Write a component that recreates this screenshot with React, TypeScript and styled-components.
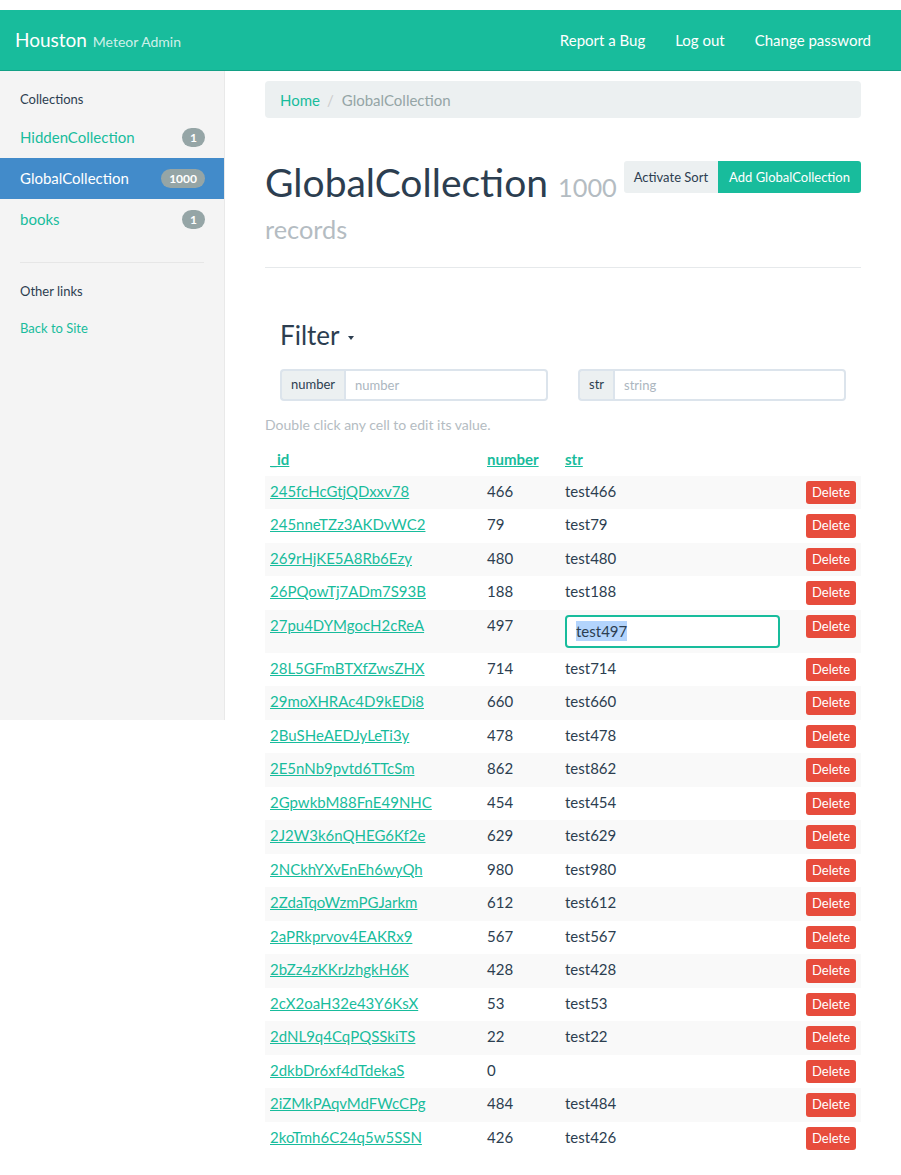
import React from "react";
import styled, { createGlobalStyle } from "styled-components";

const GlobalStyle = createGlobalStyle`
  html, body { margin: 0; padding: 0; background: #fff; }
  body {
    font-family: Lato, "Open Sans", "Liberation Sans", sans-serif;
    font-size: 15px;
    line-height: 1.42857;
    color: #2c3e50;
  }
  * { box-sizing: border-box; }
`;

const Page = styled.div`
  padding-top: 10px;
`;

const Navbar = styled.nav`
  height: 61px;
  background: #18bc9c;
  border-bottom: 1px solid #13a085;
  display: flex;
  align-items: center;
  justify-content: space-between;
  padding: 0 15px;
`;

const Brand = styled.a`
  color: #fff;
  font-size: 19px;
  text-decoration: none;
  white-space: nowrap;
`;

const BrandSub = styled.small`
  font-size: 14px;
  color: rgba(255, 255, 255, 0.8);
  margin-left: 1px;
`;

const NavLinks = styled.ul`
  display: flex;
  list-style: none;
  margin: 0;
  padding: 0;
`;

const NavLink = styled.a`
  display: block;
  color: #fff;
  font-size: 15px;
  padding: 0 15px;
  line-height: 20px;
  text-decoration: none;
`;

const Layout = styled.div`
  display: flex;
  align-items: flex-start;
`;

const Sidebar = styled.aside`
  width: 225px;
  flex: 0 0 225px;
  min-height: 649px;
  background: #f4f4f4;
  border-right: 1px solid #e9e9e9;
  padding-top: 19px;
`;

const SideHeader = styled.div<{ $mt?: number }>`
  font-size: 13px;
  color: #2c3e50;
  padding: 0 20px;
  line-height: 18.6px;
  margin-top: ${(p) => p.$mt ?? 0}px;
`;

const SideNav = styled.ul`
  list-style: none;
  margin: 8.5px 0 0;
  padding: 0;
`;

const SideItem = styled.li<{ $active?: boolean }>`
  height: 40.5px;
  margin-top: 0.5px;
  display: flex;
  align-items: center;
  justify-content: space-between;
  padding: 0 19px 0 20px;
  background: ${(p) => (p.$active ? "#428bca" : "transparent")};
`;

const SideLink = styled.a<{ $active?: boolean }>`
  color: ${(p) => (p.$active ? "#fff" : "#18bc9c")};
  font-size: 15px;
  text-decoration: none;
`;

const Badge = styled.span`
  display: inline-block;
  min-width: 21px;
  padding: 0 8px;
  height: 19px;
  line-height: 19px;
  border-radius: 10px;
  background: #95a5a6;
  color: #fff;
  font-size: 12px;
  font-weight: 700;
  text-align: center;
`;

const Divider = styled.hr`
  border: 0;
  border-top: 1px solid #e6e6e6;
  margin: 22.5px 20px 0 20px;
  height: 0;
`;

const SmallLink = styled.a`
  display: block;
  font-size: 13px;
  line-height: 18.6px;
  color: #18bc9c;
  text-decoration: none;
  padding: 0 20px;
  margin-top: 18px;
`;

const Main = styled.main`
  flex: 1;
  min-width: 0;
  padding: 10px 40px 0 40px;
`;

const Breadcrumb = styled.ol`
  list-style: none;
  margin: 0;
  height: 37px;
  padding: 9px 15px 7px;
  background: #ecf0f1;
  border-radius: 4px;
  display: flex;
  line-height: 21px;
  font-size: 15px;
`;

const Crumb = styled.li<{ $active?: boolean }>`
  color: ${(p) => (p.$active ? "#95a5a6" : "#18bc9c")};
  &:not(:first-child)::before {
    content: "/";
    color: #ccc;
    padding: 0 8px 0 7px;
  }
`;

const PageHeader = styled.div`
  display: flex;
  align-items: flex-start;
  margin-top: 42.5px;
  padding-bottom: 20.5px;
  border-bottom: 1px solid #e6e9eb;
`;

const Title = styled.h1`
  flex: 1;
  margin: 0;
  font-size: 39px;
  font-weight: 400;
  line-height: 1.1;
  color: #2c3e50;
`;

const TitleSmall = styled.small`
  font-size: 65%;
  color: #b4bcc2;
`;

const BtnGroup = styled.div`
  display: flex;
  margin-top: 0.5px;
`;

const Btn = styled.button<{ $variant: "default" | "success" }>`
  height: 32px;
  padding: 0 ${(p) => (p.$variant === "success" ? 9 : 8)}px;
  font-family: inherit;
  font-size: 13px;
  line-height: 28px;
  border: 2px solid ${(p) => (p.$variant === "success" ? "#18bc9c" : "#ecf0f1")};
  background: ${(p) => (p.$variant === "success" ? "#18bc9c" : "#ecf0f1")};
  color: ${(p) => (p.$variant === "success" ? "#fff" : "#2c3e50")};
  border-radius: 0;
  &:first-child { border-radius: 3px 0 0 3px; }
  &:last-child { border-radius: 0 3px 3px 0; }
  cursor: pointer;
`;

const FilterTitle = styled.h3`
  margin: 53.6px 0 0;
  padding: 0 15px;
  font-size: 26px;
  font-weight: 400;
  line-height: 1.1;
  display: flex;
  align-items: center;
`;

const Caret = styled.span`
  display: inline-block;
  width: 0;
  height: 0;
  margin-left: 9px;
  margin-top: 4px;
  border-top: 4px solid #2c3e50;
  border-left: 3.5px solid transparent;
  border-right: 3.5px solid transparent;
`;

const FilterGrid = styled.div`
  display: grid;
  grid-template-columns: 1fr 1fr;
  column-gap: 30px;
  padding: 0 15px;
  margin-top: 18.8px;
`;

const InputGroup = styled.div`
  display: flex;
  height: 32px;
`;

const Addon = styled.span`
  display: flex;
  align-items: center;
  padding: 0 9px;
  background: #ecf0f1;
  border: 2px solid #dce4ec;
  border-right: 0;
  border-radius: 4px 0 0 4px;
  font-size: 13px;
  color: #2c3e50;
`;

const FilterInput = styled.input`
  flex: 1;
  min-width: 0;
  height: 32px;
  border: 2px solid #dce4ec;
  border-radius: 0 4px 4px 0;
  padding: 0 9px;
  font-family: inherit;
  font-size: 13px;
  color: #2c3e50;
  outline: none;
  &::placeholder { color: #acb6c0; }
`;

const Help = styled.p`
  margin: 13px 0 0;
  color: #b4bcc2;
  font-size: 14px;
  line-height: 21.4px;
`;

const Table = styled.table`
  width: 100%;
  table-layout: fixed;
  border-collapse: collapse;
  margin-top: 9px;
`;

const Th = styled.th`
  text-align: left;
  padding: 5px;
  font-weight: 700;
  line-height: 21.4px;
`;

const HeadLink = styled.a`
  color: #18bc9c;
  text-decoration: underline;
`;

const Tr = styled.tr<{ $striped: boolean }>`
  background: ${(p) => (p.$striped ? "#f9f9f9" : "#fff")};
`;

const Td = styled.td<{ $right?: boolean }>`
  padding: 5px;
  vertical-align: top;
  line-height: 21.4px;
  text-align: ${(p) => (p.$right ? "right" : "left")};
  white-space: nowrap;
`;

const IdLink = styled.a`
  color: #18bc9c;
  text-decoration: underline;
`;

const DeleteBtn = styled.button`
  height: 23.5px;
  padding: 0 6px;
  border: 0;
  border-radius: 3px;
  background: #e74c3c;
  color: #fff;
  font-family: inherit;
  font-size: 13px;
  line-height: 23.5px;
  vertical-align: top;
  cursor: pointer;
`;

const EditBox = styled.div`
  width: 215px;
  height: 33px;
  border: 2px solid #18bc9c;
  border-radius: 4px;
  padding: 0 9px;
  display: flex;
  align-items: center;
  background: #fff;
`;

const Selected = styled.span`
  background: #b3d4fc;
  line-height: 20px;
`;

type Row = { id: string; number: number; str: string; editing?: boolean };

const rows: Row[] = [
  { id: "245fcHcGtjQDxxv78", number: 466, str: "test466" },
  { id: "245nneTZz3AKDvWC2", number: 79, str: "test79" },
  { id: "269rHjKE5A8Rb6Ezy", number: 480, str: "test480" },
  { id: "26PQowTj7ADm7S93B", number: 188, str: "test188" },
  { id: "27pu4DYMgocH2cReA", number: 497, str: "test497", editing: true },
  { id: "28L5GFmBTXfZwsZHX", number: 714, str: "test714" },
  { id: "29moXHRAc4D9kEDi8", number: 660, str: "test660" },
  { id: "2BuSHeAEDJyLeTi3y", number: 478, str: "test478" },
  { id: "2E5nNb9pvtd6TTcSm", number: 862, str: "test862" },
  { id: "2GpwkbM88FnE49NHC", number: 454, str: "test454" },
  { id: "2J2W3k6nQHEG6Kf2e", number: 629, str: "test629" },
  { id: "2NCkhYXvEnEh6wyQh", number: 980, str: "test980" },
  { id: "2ZdaTqoWzmPGJarkm", number: 612, str: "test612" },
  { id: "2aPRkprvov4EAKRx9", number: 567, str: "test567" },
  { id: "2bZz4zKKrJzhgkH6K", number: 428, str: "test428" },
  { id: "2cX2oaH32e43Y6KsX", number: 53, str: "test53" },
  { id: "2dNL9q4CqPQSSkiTS", number: 22, str: "test22" },
  { id: "2dkbDr6xf4dTdekaS", number: 0, str: "" },
  { id: "2iZMkPAqvMdFWcCPg", number: 484, str: "test484" },
  { id: "2koTmh6C24q5w5SSN", number: 426, str: "test426" },
];

const collections = [
  { name: "HiddenCollection", count: 1 },
  { name: "GlobalCollection", count: 1000, active: true },
  { name: "books", count: 1 },
];

export default function App() {
  return (
    <Page>
      <GlobalStyle />
      <Navbar>
        <Brand href="#">
          Houston <BrandSub>Meteor Admin</BrandSub>
        </Brand>
        <NavLinks>
          <li><NavLink href="#">Report a Bug</NavLink></li>
          <li><NavLink href="#">Log out</NavLink></li>
          <li><NavLink href="#">Change password</NavLink></li>
        </NavLinks>
      </Navbar>
      <Layout>
        <Sidebar>
          <SideHeader>Collections</SideHeader>
          <SideNav>
            {collections.map((c) => (
              <SideItem key={c.name} $active={c.active}>
                <SideLink href="#" $active={c.active}>{c.name}</SideLink>
                <Badge>{c.count}</Badge>
              </SideItem>
            ))}
          </SideNav>
          <Divider />
          <SideHeader $mt={19}>Other links</SideHeader>
          <SmallLink href="#">Back to Site</SmallLink>
        </Sidebar>
        <Main>
          <Breadcrumb>
            <Crumb>Home</Crumb>
            <Crumb $active>GlobalCollection</Crumb>
          </Breadcrumb>
          <PageHeader>
            <Title>
              GlobalCollection <TitleSmall>1000 records</TitleSmall>
            </Title>
            <BtnGroup>
              <Btn $variant="default">Activate Sort</Btn>
              <Btn $variant="success">Add GlobalCollection</Btn>
            </BtnGroup>
          </PageHeader>
          <FilterTitle>
            Filter <Caret />
          </FilterTitle>
          <FilterGrid>
            <InputGroup>
              <Addon>number</Addon>
              <FilterInput placeholder="number" />
            </InputGroup>
            <InputGroup>
              <Addon>str</Addon>
              <FilterInput placeholder="string" />
            </InputGroup>
          </FilterGrid>
          <Help>Double click any cell to edit its value.</Help>
          <Table>
            <colgroup>
              <col style={{ width: 217 }} />
              <col style={{ width: 78 }} />
              <col style={{ width: 241 }} />
              <col style={{ width: 60 }} />
            </colgroup>
            <thead>
              <tr>
                <Th><HeadLink href="#">_id</HeadLink></Th>
                <Th><HeadLink href="#">number</HeadLink></Th>
                <Th><HeadLink href="#">str</HeadLink></Th>
                <Th />
              </tr>
            </thead>
            <tbody>
              {rows.map((r, i) => (
                <Tr key={r.id} $striped={i % 2 === 0}>
                  <Td><IdLink href="#">{r.id}</IdLink></Td>
                  <Td>{r.number}</Td>
                  <Td>
                    {r.editing ? (
                      <EditBox role="textbox">
                        <Selected>{r.str}</Selected>
                      </EditBox>
                    ) : (
                      r.str
                    )}
                  </Td>
                  <Td $right><DeleteBtn>Delete</DeleteBtn></Td>
                </Tr>
              ))}
            </tbody>
          </Table>
        </Main>
      </Layout>
    </Page>
  );
}
